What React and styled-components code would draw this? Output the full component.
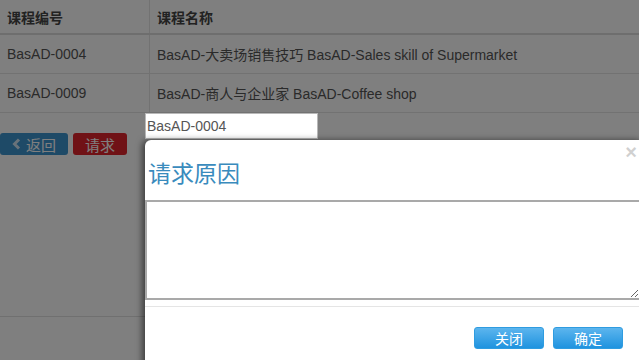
import React from 'react';
import styled, { createGlobalStyle } from 'styled-components';

const Global = createGlobalStyle`
  html, body {
    margin: 0;
    padding: 0;
    overflow: hidden;
    background: #fff;
    font-family: "Liberation Sans", Arial, "Noto Sans CJK SC", sans-serif;
    font-size: 14px;
    color: #555;
  }
`;

const Page = styled.div`
  position: relative;
  width: 639px;
  height: 360px;
  overflow: hidden;
`;

const Table = styled.table`
  width: 100%;
  border-collapse: collapse;
  th, td {
    text-align: left;
    padding: 0 7px;
    border-left: 1px solid #e4e4e4;
    &:first-child { border-left: none; width: 135px; }
  }
  th {
    height: 33px;
    font-weight: bold;
    color: #444;
    border-bottom: 2px solid #dcdcdc;
    font-family: "Noto Sans CJK SC", sans-serif;
    font-size: 14px;
  }
  td {
    height: 38px;
    border-bottom: 1px solid #e4e4e4;
    color: #555;
  }
`;

const Actions = styled.div`
  display: flex;
  gap: 5px;
  margin-top: 20px;
  padding-bottom: 161px;
  border-bottom: 1px solid #e0e0e0;
`;

const Btn = styled.button`
  display: flex;
  align-items: center;
  gap: 5px;
  height: 22px;
  width: ${p => p.$w}px;
  padding: 0 0 0 ${p => p.$pad || 12}px;
  border: none;
  border-radius: 3px;
  color: #fff;
  font-family: "Noto Sans CJK SC", sans-serif;
  font-size: 15px;
  background: ${p => (p.$red ? '#e1252c' : '#3d94cf')};
`;

const Chevron = () => (
  <svg width="9" height="12" viewBox="0 0 9 12">
    <path d="M7 1.5 L2.5 6 L7 10.5" fill="none" stroke="#d0e4f4" strokeWidth="3" />
  </svg>
);

const Overlay = styled.div`
  position: absolute;
  inset: 0;
  background: rgba(0, 0, 0, 0.5);
`;

const Dialog = styled.div`
  position: absolute;
  left: 145px;
  top: 113px;
  width: 500px;
`;

const CodeInput = styled.div`
  width: 170px;
  height: 24px;
  line-height: 24px;
  background: #fff;
  border: 1px solid #b8b8b8;
  padding-left: 1px;
  color: #555;
  font-size: 14px;
  box-sizing: content-box;
`;

const Panel = styled.div`
  position: relative;
  margin-top: 1px;
  height: 260px;
  background: #fff;
  border-radius: 6px 6px 0 0;
  box-shadow: -3px 0 6px rgba(0, 0, 0, 0.5);
`;

const Close = styled.span`
  position: absolute;
  top: 0;
  right: 8px;
  font-size: 20px;
  font-weight: bold;
  color: #000;
  opacity: 0.18;
  line-height: 24px;
`;

const Title = styled.h3`
  margin: 0;
  padding: 17px 3px 13px;
  height: 30px;
  line-height: 30px;
  font-family: "Noto Sans CJK SC", sans-serif;
  font-weight: normal;
  font-size: 23px;
  color: #3a8bbd;
`;

const Area = styled.textarea`
  display: block;
  width: 495px;
  height: 100px;
  margin: 0;
  border: 1px solid #a9a9a9;
  border-width: 2px 1px 2px 2px;
  box-sizing: border-box;
  resize: both;
`;

const Footer = styled.div`
  margin-top: 6px;
  border-top: 1px solid #e5e5e5;
  display: flex;
  justify-content: flex-end;
  gap: 9px;
  padding: 20px 22px 0 0;
`;

const BlueBtn = styled.button`
  width: 70px;
  height: 22px;
  border: 1px solid #2f9ce0;
  border-radius: 3px;
  background: linear-gradient(#5cb5ee, #1f93df);
  color: #fff;
  font-family: "Noto Sans CJK SC", sans-serif;
  font-size: 14px;
  padding: 0;
`;

export default function App() {
  return (
    <Page>
      <Global />
      <Table>
        <thead>
          <tr>
            <th>课程编号</th>
            <th>课程名称</th>
          </tr>
        </thead>
        <tbody>
          <tr>
            <td>BasAD-0004</td>
            <td>BasAD-大卖场销售技巧 BasAD-Sales skill of Supermarket</td>
          </tr>
          <tr>
            <td>BasAD-0009</td>
            <td>BasAD-商人与企业家 BasAD-Coffee shop</td>
          </tr>
        </tbody>
      </Table>
      <Actions>
        <Btn $w={68} $pad={12}><Chevron />返回</Btn>
        <Btn $w={54} $pad={12} $red>请求</Btn>
      </Actions>
      <Overlay />
      <Dialog>
        <CodeInput>BasAD-0004</CodeInput>
        <Panel>
          <Close>×</Close>
          <Title>请求原因</Title>
          <Area />
          <Footer>
            <BlueBtn>关闭</BlueBtn>
            <BlueBtn>确定</BlueBtn>
          </Footer>
        </Panel>
      </Dialog>
    </Page>
  );
}
